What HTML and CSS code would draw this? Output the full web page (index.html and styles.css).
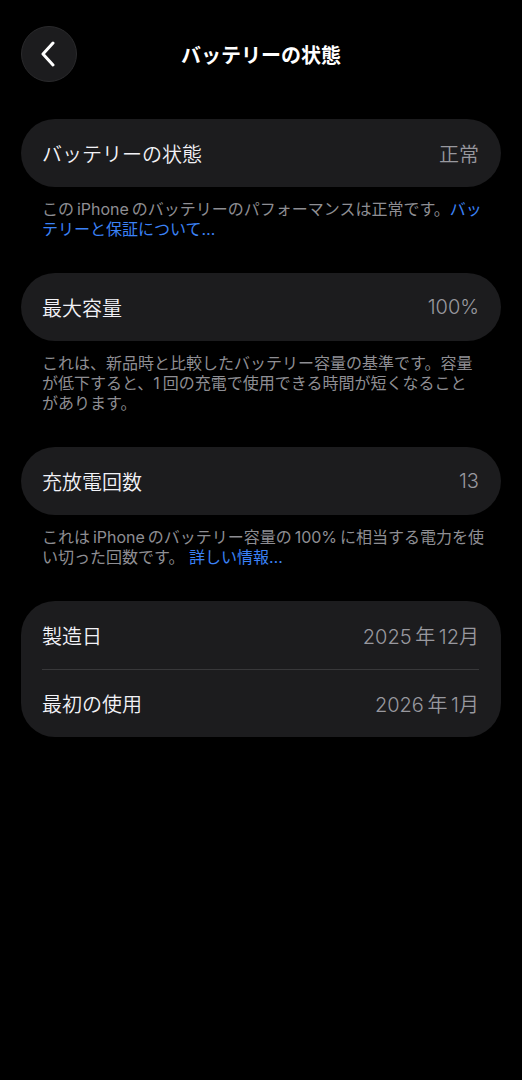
FILE: index.html
```html
<!DOCTYPE html>
<html lang="ja">
<head>
    <meta charset="utf-8">
    <title>バッテリーの状態</title>
    <link rel="stylesheet" href="styles.css">
</head>
<body>
    <header class="nav">
        <button class="back" aria-label="戻る">
            <svg width="16" height="26" viewBox="0 0 16 26">
                <path d="M13 2 L3 13 L13 24" fill="none" stroke="#fff" stroke-width="3" stroke-linecap="round" stroke-linejoin="round"/>
            </svg>
        </button>
        <h1 class="title">バッテリーの状態</h1>
        <span></span>
    </header>

    <main class="content">
        <section class="group">
            <div class="card">
                <div class="row">
                    <span class="label">バッテリーの状態</span>
                    <span class="value">正常</span>
                </div>
            </div>
            <p class="footnote">この&thinsp;iPhone&thinsp;のバッテリーのパフォーマンスは正常です。<a href="#">バッ<br>テリーと保証について…</a></p>
        </section>

        <section class="group">
            <div class="card">
                <div class="row">
                    <span class="label">最大容量</span>
                    <span class="value">100%</span>
                </div>
            </div>
            <p class="footnote">これは、新品時と比較したバッテリー容量の基準です。容量<br>が低下すると、1&thinsp;回の充電で使用できる時間が短くなること<br>があります。</p>
        </section>

        <section class="group">
            <div class="card">
                <div class="row">
                    <span class="label">充放電回数</span>
                    <span class="value">13</span>
                </div>
            </div>
            <p class="footnote">これは&thinsp;iPhone&thinsp;のバッテリー容量の&thinsp;100%&thinsp;に相当する電力を使<br>い切った回数です。 <a href="#">詳しい情報…</a></p>
        </section>

        <section class="group">
            <div class="card">
                <div class="row">
                    <span class="label">製造日</span>
                    <span class="value">2025&thinsp;年&thinsp;12月</span>
                </div>
                <div class="row">
                    <span class="label">最初の使用</span>
                    <span class="value">2026&thinsp;年&thinsp;1月</span>
                </div>
            </div>
        </section>
    </main>
</body>
</html>
```

FILE: styles.css
```css
html, body {
    background: #000;
}
body {
    margin: 0;
    font-family: "Inter", "Noto Sans CJK JP", sans-serif;
    color: #f2f2f7;
    -webkit-font-smoothing: antialiased;
}

.nav {
    display: grid;
    grid-template-columns: 56px 1fr 56px;
    align-items: center;
    padding: 26px 21px 0;
}
.back {
    width: 56px;
    height: 56px;
    border-radius: 50%;
    background: #1c1c1e;
    border: 1px solid #2a2a2c;
    display: flex;
    align-items: center;
    justify-content: center;
    padding: 0 3px 0 0;
    cursor: pointer;
}
.title {
    margin: 0;
    text-align: center;
    font-size: 20px;
    font-weight: 700;
    color: #fff;
}

.content {
    padding: 37px 21px 0;
}
.group {
    margin-bottom: 34px;
}
.card {
    background: #1c1c1e;
    border-radius: 34px;
    padding: 0 22px 0 21px;
}
.row {
    height: 68px;
    display: flex;
    align-items: center;
    justify-content: space-between;
    font-size: 20px;
    font-weight: 350;
}
.row + .row {
    border-top: 1px solid #38383a;
    height: 67px;
}
.label {
    color: #f2f2f7;
}
.value {
    color: #98989e;
}

.footnote {
    margin: 0;
    padding: 12px 10px 0 21px;
    font-size: 16px;
    line-height: 20px;
    color: #8e8e93;
}
.footnote a {
    color: #3b82f6;
    text-decoration: none;
}
```
